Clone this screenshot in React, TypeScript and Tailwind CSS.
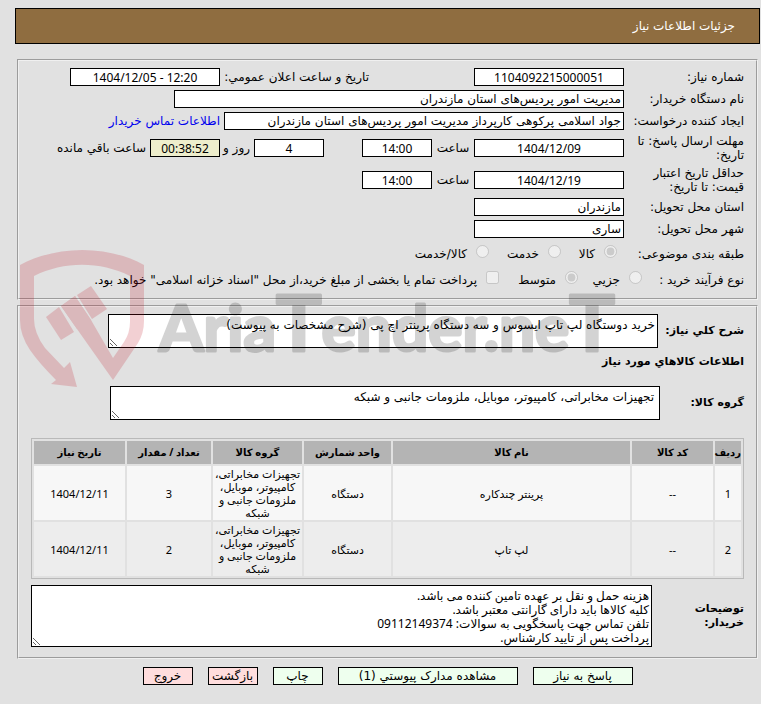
import type { InputHTMLAttributes, ReactNode } from "react";

type BoxProps = InputHTMLAttributes<HTMLInputElement> & {
    label?: string;
};

const items = [
    {
        row: 1,
        code: "--",
        name: "پرینتر چندکاره",
        unit: "دستگاه",
        group: "تجهیزات مخابراتی، کامپیوتر، موبایل، ملزومات جانبی و شبکه",
        count: 3,
        date: "1404/12/11",
    },
    {
        row: 2,
        code: "--",
        name: "لپ تاپ",
        unit: "دستگاه",
        group: "تجهیزات مخابراتی، کامپیوتر، موبایل، ملزومات جانبی و شبکه",
        count: 2,
        date: "1404/12/11",
    },
];

const columns = [
    { title: "ردیف", width: "w-[26px]" },
    { title: "کد کالا", width: "w-[81px]" },
    { title: "نام کالا", width: "" },
    { title: "واحد شمارش", width: "w-[87px]" },
    { title: "گروه کالا", width: "w-[89px]" },
    { title: "تعداد / مقدار", width: "w-[84px]" },
    { title: "تاریخ نیاز", width: "w-[91px]" },
];

const buttons = [
    { text: "پاسخ به نیاز", style: "w-[100px] bg-[#eeffee]" },
    { text: "مشاهده مدارک پیوستي (1)", style: "w-[180px] bg-[#eeffee]" },
    { text: "چاپ", style: "w-[50px] bg-[#eeffee]" },
    { text: "بازگشت", style: "w-[50px] bg-[#ffdddd]" },
    { text: "خروج", style: "w-[50px] bg-[#ffdddd]" },
];

const numeric = "bg-white text-center font-['Noto_Sans','DejaVu_Sans',sans-serif]";

function Box({ label, className = "", ...rest }: BoxProps) {
    return (
        <input
            readOnly
            aria-label={label}
            className={`h-[18px] shrink-0 border border-black px-[2px] outline-none ${className}`}
            {...rest}
        />
    );
}

function Row({
    label,
    id,
    tall,
    children,
}: {
    label: string;
    id?: string;
    tall?: boolean;
    children: ReactNode;
}) {
    return (
        <div className={`flex items-center ${tall ? "h-8" : "h-[22px]"}`}>
            <label htmlFor={id} className="w-[120px] shrink-0">
                {label}
            </label>
            {children}
        </div>
    );
}

function Choice({
    text,
    type = "radio",
    name,
    checked = false,
    className = "",
}: {
    text: string;
    type?: "radio" | "checkbox";
    name: string;
    checked?: boolean;
    className?: string;
}) {
    return (
        <label className={`flex items-center gap-[9px] whitespace-nowrap ${className}`}>
            <input
                type={type}
                name={name}
                defaultChecked={checked}
                disabled
                className="mb-1 h-[13px] w-[13px] shrink-0"
            />
            {text}
        </label>
    );
}

function Watermark() {
    return (
        <svg
            aria-hidden="true"
            viewBox="0 0 640 150"
            className="pointer-events-none absolute top-[245px] left-[15px] h-[150px] w-[640px]"
        >
            <g fill="#c00d1e" opacity="0.19">
                <path d="M5 20 C42 0 93 0 129 20 V76 Q129 88 123 98 L98 135 L62 84 L46 61 L60 51 L76 75 L98 113 L109 97 Q115 88 115 77 V31 C85 16 49 16 19 31 V74 Q19 88 30 103 L49 123 L55 117 L62 142 L36 139 L41 135 Q24 118 15 105 Q5 90 5 75 Z" />
                <path d="M31 72 L44 62 L59 87 L46 95 Z" />
                <path d="M46 61 L60 51 L76 75 L77 81 L62 84 Z" />
                <path d="M62 50 L76 41 L92 64 L77 74 Z" />
            </g>
            <text
                x="144"
                y="106"
                direction="ltr"
                fill="#000"
                stroke="#000"
                strokeWidth="3"
                strokeLinejoin="round"
                opacity="0.17"
                className="font-[Lato,'Liberation_Sans',sans-serif] text-[64px] font-bold"
            >
                Aria<tspan className="text-[76px]">T</tspan>ender.ne<tspan className="text-[76px]">T</tspan>
            </text>
        </svg>
    );
}

export default function App() {
    return (
        <div
            dir="rtl"
            className="relative min-h-screen bg-[#e1e1e1] pt-2 pr-px pb-4 pl-[15px] font-['DejaVu_Sans',sans-serif] text-[12px] leading-[14px] text-black"
        >
            <h1 className="flex h-9 items-center border border-black bg-[#8f6d40] pr-6 text-white">
                جزئیات اطلاعات نیاز
            </h1>

            <fieldset className="mt-[15px] mr-[2px] ml-[2px] border-2 border-[#f0f0f0] px-3 pt-[5px] pb-[6px] [border-style:groove]">
                <Row label="شماره نیاز:" id="number">
                    <Box id="number" defaultValue="1104092215000051" className={`w-[150px] ${numeric}`} />
                    <label htmlFor="announce" className="mr-[105px] w-[149px] shrink-0 whitespace-nowrap">
                        تاریخ و ساعت اعلان عمومي:
                    </label>
                    <Box
                        id="announce"
                        dir="ltr"
                        defaultValue="1404/12/05 - 12:20"
                        className={`w-[150px] ${numeric}`}
                    />
                </Row>

                <Row label="نام دستگاه خریدار:" id="buyer">
                    <Box id="buyer" defaultValue="مدیریت امور پردیس‌های استان مازندران" className="w-[450px] bg-white" />
                </Row>

                <Row label="ایجاد کننده درخواست:" id="creator">
                    <Box
                        id="creator"
                        defaultValue="جواد اسلامی پرکوهی کارپرداز مدیریت امور پردیس‌های استان مازندران"
                        className="w-[400px] bg-white"
                    />
                    <a href="#contact" className="mr-1 whitespace-nowrap text-[#0000ee]">
                        اطلاعات تماس خریدار
                    </a>
                </Row>

                <Row label="مهلت ارسال پاسخ: تا تاریخ:" id="deadline" tall>
                    <Box id="deadline" defaultValue="1404/12/09" className={`w-[150px] ${numeric}`} />
                    <label htmlFor="deadline-time" className="w-[42px] shrink-0 text-center">
                        ساعت
                    </label>
                    <Box id="deadline-time" defaultValue="14:00" className={`w-[70px] ${numeric}`} />
                    <Box label="روز" defaultValue="4" className={`mr-[38px] w-[70px] ${numeric}`} />
                    <span className="w-[34px] shrink-0 pr-1 whitespace-nowrap">روز و</span>
                    <Box
                        label="زمان باقي مانده"
                        defaultValue="00:38:52"
                        className="w-[70px] bg-[#eeeecc] text-center font-['Noto_Sans','DejaVu_Sans',sans-serif]"
                    />
                    <span className="pr-1 whitespace-nowrap">ساعت باقي مانده</span>
                </Row>

                <Row label="حداقل تاریخ اعتبار قیمت: تا تاریخ:" id="validity" tall>
                    <Box id="validity" defaultValue="1404/12/19" className={`w-[150px] ${numeric}`} />
                    <label htmlFor="validity-time" className="w-[42px] shrink-0 text-center">
                        ساعت
                    </label>
                    <Box id="validity-time" defaultValue="14:00" className={`w-[70px] ${numeric}`} />
                </Row>

                <Row label="استان محل تحویل:" id="province">
                    <Box id="province" defaultValue="مازندران" className="w-[150px] bg-white" />
                </Row>

                <Row label="شهر محل تحویل:" id="city">
                    <Box id="city" defaultValue="ساری" className="w-[150px] bg-white" />
                </Row>

                <div className="flex h-[27px] items-center">
                    <span className="w-[127px] shrink-0">طبقه بندی موضوعی:</span>
                    <Choice text="کالا" name="subject" checked className="w-14" />
                    <Choice text="خدمت" name="subject" className="w-[72px]" />
                    <Choice text="کالا/خدمت" name="subject" />
                </div>

                <div className="flex h-[25px] items-center">
                    <span className="w-[102px] shrink-0">نوع فرآیند خرید :</span>
                    <Choice text="جزیي" name="process" className="w-16" />
                    <Choice text="متوسط" name="process" checked className="w-[79px]" />
                    <Choice
                        type="checkbox"
                        text={'پرداخت تمام یا بخشی از مبلغ خرید،از محل "اسناد خزانه اسلامی" خواهد بود.'}
                        name="treasury"
                    />
                </div>
            </fieldset>

            <fieldset className="mt-[5px] mr-[2px] ml-[2px] border-2 border-[#f0f0f0] px-3 pt-[7px] pb-[10px] [border-style:groove]">
                <div className="flex items-center">
                    <label htmlFor="summary" className="w-[86px] shrink-0 text-[11px] leading-[14px] font-bold whitespace-nowrap">
                        شرح کلي نیاز:
                    </label>
                    <textarea
                        id="summary"
                        readOnly
                        defaultValue="خرید دوستگاه لپ تاپ ایسوس و سه دستگاه پرینتر اچ پی (شرح مشخصات به پیوست)"
                        className="h-[34px] w-[550px] border border-black bg-white px-[2px] pt-[3px]"
                    />
                </div>

                <h2 className="mt-[7px] text-[11px] leading-[14px] font-bold">اطلاعات کالاهاي مورد نیاز</h2>

                <div className="mt-[17px] flex items-center">
                    <label htmlFor="group" className="w-[84px] shrink-0 text-[11px] leading-[14px] font-bold">
                        گروه کالا:
                    </label>
                    <textarea
                        id="group"
                        readOnly
                        defaultValue="تجهیزات مخابراتی، کامپیوتر، موبایل، ملزومات جانبی و شبکه"
                        className="h-[34px] w-[550px] border border-black bg-white px-[5px] pt-[3px]"
                    />
                </div>

                <table className="mt-[18px] w-full table-fixed border-separate border-spacing-[2px] border border-[#b9b9b9] text-center font-['Noto_Sans','DejaVu_Sans',sans-serif] text-[11px] leading-[13px]">
                    <thead>
                        <tr className="h-[23px] bg-[#b4b4b4] text-[10px]">
                            {columns.map((column) => (
                                <th key={column.title} className={`p-0 whitespace-nowrap ${column.width}`}>
                                    {column.title}
                                </th>
                            ))}
                        </tr>
                    </thead>
                    <tbody>
                        {items.map((item) => (
                            <tr key={item.row} className="h-[54px] odd:bg-[#f7f7f7] even:bg-[#ededed]">
                                <td className="p-px">{item.row}</td>
                                <td className="p-px">{item.code}</td>
                                <td className="p-px">{item.name}</td>
                                <td className="p-px">{item.unit}</td>
                                <td className="p-px">{item.group}</td>
                                <td className="p-px">{item.count}</td>
                                <td className="p-px">{item.date}</td>
                            </tr>
                        ))}
                    </tbody>
                </table>

                <div className="mt-[6px] flex items-center">
                    <label htmlFor="notes" className="w-[92px] shrink-0 pl-8 text-[11px] leading-[14px] font-bold">
                        توضیحات خریدار:
                    </label>
                    <textarea
                        id="notes"
                        readOnly
                        defaultValue={
                            "هزینه حمل و نقل بر عهده تامین کننده می باشد.\nکلیه کالاها باید دارای گارانتی معتبر باشد.\nتلفن تماس جهت پاسخگویی به سوالات: 09112149374\nپرداخت پس از تایید کارشناس."
                        }
                        className="h-[62px] flex-1 border border-black bg-white px-[2px] pt-[3px] font-['Noto_Sans','DejaVu_Sans',sans-serif]"
                    />
                </div>
            </fieldset>

            <div className="mt-2 flex justify-center gap-[15px]">
                {buttons.map((button) => (
                    <button
                        key={button.text}
                        type="button"
                        className={`h-[18px] border border-black whitespace-nowrap ${button.style}`}
                    >
                        {button.text}
                    </button>
                ))}
            </div>

            <Watermark />
        </div>
    );
}
